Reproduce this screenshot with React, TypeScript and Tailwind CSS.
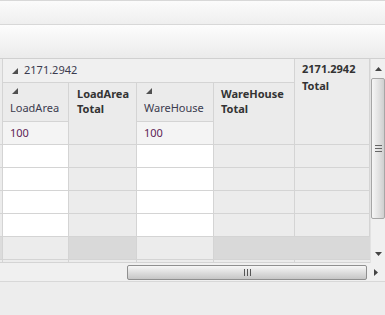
import React from "react";

const Tri = () => (
  <svg width="6" height="6" viewBox="0 0 6 6" className="block">
    <polygon points="6,0 6,6 0,6" fill="#505050" />
  </svg>
);

export default function App() {
  const dataRows = [0, 1, 2, 3];
  return (
    <div
      className="w-[385px] h-[315px] bg-[#ededed] flex flex-col overflow-hidden text-[11px]"
      style={{ fontFamily: '"Noto Sans", "Open Sans", sans-serif' }}
    >
      {/* toolbars */}
      <div className="h-[25px] border-t border-b border-[#d8d8d8] bg-gradient-to-b from-[#fbfbfb] to-[#efefef]" />
      <div className="h-[34px] border-b border-[#d0d0d0] bg-gradient-to-b from-[#fdfdfd] to-[#ebebeb]" />

      {/* pivot grid + vertical scrollbar */}
      <div className="flex h-[204px]">
        <div className="grid grid-cols-[3px_66px_68px_77px_81px_75px] grid-rows-[24px_39px_23px_23px_23px_23px_23px_23px_3px] bg-[#ececec]">
          {/* left strip */}
          <div className="row-span-3 border-r border-b border-[#d4d4d4] bg-[#ececec]" />
          <div className="col-span-4 flex items-center gap-[6px] pl-[9px] border-r border-b border-[#d4d4d4] bg-[#f0f0f0] text-[#3b3b4f]">
            <Tri />
            <span>2171.2942</span>
          </div>
          <div className="row-span-3 px-[7px] pt-[1px] border-r border-b border-[#d4d4d4] bg-[#ececec] font-bold text-[#333] leading-[17px]">
            2171.2942
            <br />
            Total
          </div>

          <div className="flex flex-col pl-[9px] pt-[5px] gap-[6px] border-r border-b border-[#d4d4d4] bg-[#ebebeb] text-[#3b3b4f]">
            <Tri />
            <span className="-ml-[2px]">LoadArea</span>
          </div>
          <div className="row-span-2 px-[8px] pt-[3px] border-r border-b border-[#d4d4d4] bg-[#ebebeb] font-bold text-[#333] leading-[15px]">
            LoadArea
            <br />
            Total
          </div>
          <div className="flex flex-col pl-[9px] pt-[5px] gap-[6px] border-r border-b border-[#d4d4d4] bg-[#ebebeb] text-[#3b3b4f]">
            <Tri />
            <span className="-ml-[2px] whitespace-nowrap">WareHouse</span>
          </div>
          <div className="row-span-2 px-[7px] pt-[3px] border-r border-b border-[#d4d4d4] bg-[#ebebeb] font-bold text-[#333] leading-[15px]">
            WareHouse
            <br />
            Total
          </div>

          <div className="flex items-center pl-[7px] border-r border-b border-[#d4d4d4] bg-[#f4f4f4] text-[#5e2455]">
            100
          </div>
          <div className="flex items-center pl-[7px] border-r border-b border-[#d4d4d4] bg-[#f4f4f4] text-[#5e2455]">
            100
          </div>

          {dataRows.map((r) => (
            <React.Fragment key={r}>
              <div className="border-r border-b border-[#d4d4d4] bg-[#ececec]" />
              <div className="border-r border-b border-[#d4d4d4] bg-white" />
              <div className="border-r border-b border-[#d4d4d4] bg-[#ececec]" />
              <div className="border-r border-b border-[#d4d4d4] bg-white" />
              <div className="border-r border-b border-[#d4d4d4] bg-[#ececec]" />
              <div className="border-r border-b border-[#d4d4d4] bg-[#ececec]" />
            </React.Fragment>
          ))}

          {/* total row */}
          <div className="border-r border-b border-[#d4d4d4] bg-[#dcdcdc]" />
          <div className="border-r border-b border-[#d4d4d4] bg-[#ececec]" />
          <div className="border-r border-b border-[#d4d4d4] bg-[#d9d9d9]" />
          <div className="border-r border-b border-[#d4d4d4] bg-[#ececec]" />
          <div className="border-b border-[#d4d4d4] bg-[#d9d9d9]" />
          <div className="border-b border-[#d4d4d4] bg-[#d9d9d9]" />

          {/* thin trailing row */}
          <div className="border-r border-b border-[#d4d4d4]" />
          <div className="border-r border-b border-[#d4d4d4]" />
          <div className="border-r border-b border-[#d4d4d4]" />
          <div className="border-r border-b border-[#d4d4d4]" />
          <div className="border-r border-b border-[#d4d4d4]" />
          <div className="border-b border-[#d4d4d4]" />
        </div>

        {/* vertical scrollbar */}
        <div className="w-[15px] flex flex-col items-center bg-[#f0f0f0] border-l border-[#e2e2e2]">
          <div className="h-[19px] flex items-center justify-center">
            <svg width="7" height="4" viewBox="0 0 7 4">
              <polygon points="3.5,0 7,4 0,4" fill="#444" />
            </svg>
          </div>
          <div className="w-[14px] h-[141px] rounded-[2px] border border-[#a6a6a6] bg-gradient-to-r from-[#f6f6f6] via-[#e4e4e4] to-[#cfcfcf] flex flex-col items-center justify-center gap-[2px]">
            <div className="w-[7px] h-px bg-[#666]" />
            <div className="w-[7px] h-px bg-[#666]" />
            <div className="w-[7px] h-px bg-[#666]" />
          </div>
          <div className="flex-1 flex items-end justify-center pb-[7px]">
            <svg width="7" height="4" viewBox="0 0 7 4">
              <polygon points="0,0 7,0 3.5,4" fill="#444" />
            </svg>
          </div>
        </div>
      </div>

      {/* horizontal scrollbar */}
      <div className="h-[19px] flex items-center bg-[#f0f0f0] border-b border-[#d8d8d8]">
        <div className="w-[127px]" />
        <div className="w-[240px] h-[15px] rounded-[2px] border border-[#8f8f8f] bg-gradient-to-b from-[#f7f7f7] via-[#dedede] to-[#c6c6c6] flex items-center justify-center gap-[2px]">
          <div className="w-px h-[7px] bg-[#555]" />
          <div className="w-px h-[7px] bg-[#555]" />
          <div className="w-px h-[7px] bg-[#555]" />
        </div>
        <div className="flex-1 flex items-center justify-center">
          <svg width="4" height="7" viewBox="0 0 4 7">
            <polygon points="0,0 4,3.5 0,7" fill="#444" />
          </svg>
        </div>
      </div>

      <div className="flex-1 bg-[#ededed]" />
    </div>
  );
}
